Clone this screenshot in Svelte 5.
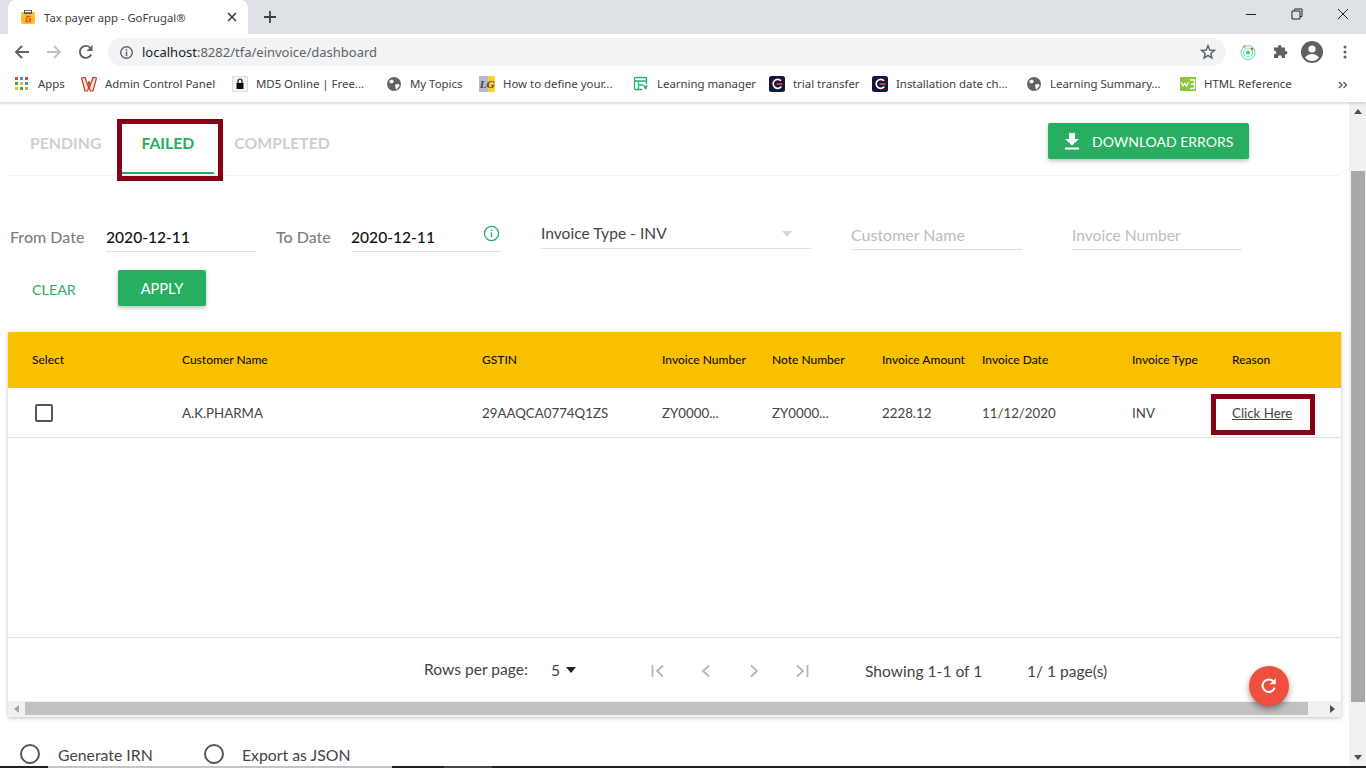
<script>
  const columns = ['Select','Customer Name','GSTIN','Invoice Number','Note Number','Invoice Amount','Invoice Date','Invoice Type','Reason'];
</script>

<div class="page">
  <header class="browser">
    <div class="tabstrip">
      <div class="tab">
        <svg class="fav" viewBox="0 0 16 16" width="16" height="16">
          <path d="M1 4.500 Q1 3 2.500 3 H13.500 Q15 3 15 4.500 V13 Q15 15 13 15 H3 Q1 15 1 13Z" fill="#fbc02d"/>
          <rect x="4" y="1" width="8" height="4" fill="#555"/>
          <rect x="5" y="1.800" width="6" height="1.400" fill="#fff"/>
          <path d="M10.500 7.500 H7 L6 12.500 H10 L10.500 10 H8.500" fill="none" stroke="#e8541c" stroke-width="1.500"/>
        </svg>
        <span class="tabtitle">Tax payer app - GoFrugal®</span>
        <svg class="tabx" viewBox="0 0 10 10" width="10" height="10"><path d="M1 1 L9 9 M9 1 L1 9" stroke="#3c4043" stroke-width="1.700"/></svg>
      </div>
      <svg class="plus" viewBox="0 0 12 12" width="12" height="12"><path d="M6 0 V12 M0 6 H12" stroke="#3c4043" stroke-width="1.800"/></svg>
      <div class="winctl">
        <svg viewBox="0 0 12 12" width="12" height="12"><path d="M1 6.500 H11" stroke="#222" stroke-width="1"/></svg>
        <svg viewBox="0 0 12 12" width="12" height="12"><path d="M3.500 2.500 V1 H11 V8.500 H9 M1 3 H9 V11 H1Z" fill="none" stroke="#222" stroke-width="1"/></svg>
        <svg viewBox="0 0 12 12" width="12" height="12"><path d="M1 1 L11 11 M11 1 L1 11" stroke="#222" stroke-width="1"/></svg>
      </div>
    </div>

    <div class="toolbar">
      <svg class="nav back" viewBox="0 0 16 16" width="16" height="16"><path d="M15 8 H2 M8 2 L2 8 L8 14" fill="none" stroke="#5f6368" stroke-width="1.900"/></svg>
      <svg class="nav fwd" viewBox="0 0 16 16" width="16" height="16"><path d="M1 8 H14 M8 2 L14 8 L8 14" fill="none" stroke="#bdc1c6" stroke-width="1.900"/></svg>
      <svg class="nav reload" viewBox="0 0 16 16" width="16" height="16"><path d="M13.300 10.500 A6 6 0 1 1 12.500 4" fill="none" stroke="#5f6368" stroke-width="1.900"/><path d="M14.500 1 V7 H8.500Z" fill="#5f6368"/></svg>
      <div class="omnibox">
        <svg viewBox="0 0 16 16" width="15" height="15"><circle cx="8" cy="8" r="6.200" fill="none" stroke="#5f6368" stroke-width="1.500"/><path d="M8 7 V12 M8 4.200 V5.800" stroke="#5f6368" stroke-width="1.600"/></svg>
        <span class="url"><b>localhost</b>:8282/tfa/einvoice/dashboard</span>
        <svg class="star" viewBox="0 0 16 16" width="16" height="16"><path d="M8 1.800 L9.800 6 L14.300 6.400 L10.900 9.400 L11.900 13.900 L8 11.500 L4.100 13.900 L5.100 9.400 L1.700 6.400 L6.200 6Z" fill="none" stroke="#5f6368" stroke-width="1.500"/></svg>
      </div>
      <svg class="ext radar" viewBox="0 0 16 16" width="16" height="16"><circle cx="8" cy="8.500" r="7" fill="none" stroke="#6fe6b8" stroke-width="1.200"/><circle cx="8" cy="8.500" r="4.500" fill="none" stroke="#6fe6b8" stroke-width="1.200"/><circle cx="8" cy="8.500" r="2" fill="#3fce97"/><circle cx="12" cy="5" r="1.300" fill="#ee5a33"/><circle cx="4.300" cy="2.500" r="1.300" fill="#f0953b"/></svg>
      <svg class="ext puzzle" viewBox="0 0 16 16" width="16" height="16"><path d="M6 2.500 A1.800 1.800 0 0 1 9.500 2.500 V3.500 H13 V7 H14 A1.800 1.800 0 0 1 14 10.500 H13 V14 H9.800 V13 A1.800 1.800 0 0 0 6.200 13 V14 H2 V10.200 H3 A1.800 1.800 0 0 0 3 6.800 H2 V3.500 H6Z" fill="#5f6368"/></svg>
      <svg class="ext avatar" viewBox="0 0 22 22" width="22" height="22"><circle cx="11" cy="11" r="11" fill="#5f6368"/><circle cx="11" cy="8" r="3.600" fill="#fff"/><path d="M4 16.500 Q7 13 11 13 Q15 13 18 16.500 Q15 20 11 20 Q7 20 4 16.500Z" fill="#fff"/></svg>
      <svg class="ext dots" viewBox="0 0 4 14" width="4" height="14"><circle cx="2" cy="2" r="1.500" fill="#5f6368"/><circle cx="2" cy="7" r="1.500" fill="#5f6368"/><circle cx="2" cy="12" r="1.500" fill="#5f6368"/></svg>
    </div>

    <div class="bookmarks">
      <div class="bm">
        <svg viewBox="0 0 13 13" width="13" height="13" class="apps">
          <rect x="0" y="0" width="3" height="3" fill="#ea4335"/><rect x="5" y="0" width="3" height="3" fill="#4285f4"/><rect x="10" y="0" width="3" height="3" fill="#ea4335"/>
          <rect x="0" y="5" width="3" height="3" fill="#34a853"/><rect x="5" y="5" width="3" height="3" fill="#fbbc05"/><rect x="10" y="5" width="3" height="3" fill="#4285f4"/>
          <rect x="0" y="10" width="3" height="3" fill="#fbbc05"/><rect x="5" y="10" width="3" height="3" fill="#34a853"/><rect x="10" y="10" width="3" height="3" fill="#f29900"/>
        </svg>
        <span>Apps</span>
      </div>
      <div class="bm">
        <svg viewBox="0 0 16 16" width="16" height="16"><path d="M0.500 2 L4 1.500 L7 10 L8 5 L9 10 L12 1.500 L15.500 2 L12 15 L9.500 15 L8 11 L6.500 15 L4 15Z" fill="#f3e3c8" stroke="#c9362b" stroke-width="1.200"/></svg>
        <span>Admin Control Panel</span>
      </div>
      <div class="bm">
        <svg viewBox="0 0 16 16" width="16" height="16"><rect x="0.500" y="0.500" width="15" height="15" fill="#f6f6f6" stroke="#ddd"/><rect x="4.500" y="7" width="7" height="6" fill="#111"/><path d="M6 7 V5 A2 2 0 0 1 10 5 V7" fill="none" stroke="#111" stroke-width="1.200"/></svg>
        <span>MD5 Online | Free...</span>
      </div>
      <div class="bm">
        <svg viewBox="0 0 16 16" width="16" height="16"><circle cx="8" cy="8" r="7" fill="#5f6368"/><path d="M3 5 L6 3.500 L8 5 L7 7 L4.500 7.500Z M9 8.500 L13 8 L13.500 10 L10.500 13.500 L9.500 12Z" fill="#fff"/></svg>
        <span>My Topics</span>
      </div>
      <div class="bm">
        <span class="lg">LG</span>
        <span>How to define your...</span>
      </div>
      <div class="bm">
        <svg viewBox="0 0 16 16" width="16" height="16"><path d="M9.500 13.500 H2.500 Q1.500 13.500 1.500 12.500 V2.500 Q1.500 1.500 2.500 1.500 H12.500 Q13.500 1.500 13.500 2.500 V8 M1.500 5 H13.500 M5.500 5 V13.500 M5.500 9 H10.500" fill="none" stroke="#26b36b" stroke-width="1.300"/><path d="M10 9.500 H15 L12.500 14Z" fill="#26b36b"/></svg>
        <span>Learning manager</span>
      </div>
      <div class="bm">
        <svg viewBox="0 0 16 16" width="16" height="16"><rect width="16" height="16" rx="2.500" fill="#14173a"/><path d="M12 4.800 A4.500 4.500 0 1 0 12.300 10.500" fill="none" stroke="#fff" stroke-width="1.700"/><rect x="7.500" y="7.200" width="6" height="1.800" fill="#e63838"/></svg>
        <span>trial transfer</span>
      </div>
      <div class="bm">
        <svg viewBox="0 0 16 16" width="16" height="16"><rect width="16" height="16" rx="2.500" fill="#14173a"/><path d="M12 4.800 A4.500 4.500 0 1 0 12.300 10.500" fill="none" stroke="#fff" stroke-width="1.700"/><rect x="7.500" y="7.200" width="6" height="1.800" fill="#e63838"/></svg>
        <span>Installation date ch...</span>
      </div>
      <div class="bm">
        <svg viewBox="0 0 16 16" width="16" height="16"><circle cx="8" cy="8" r="7" fill="#5f6368"/><path d="M3 5 L6 3.500 L8 5 L7 7 L4.500 7.500Z M9 8.500 L13 8 L13.500 10 L10.500 13.500 L9.500 12Z" fill="#fff"/></svg>
        <span>Learning Summary...</span>
      </div>
      <div class="bm">
        <svg viewBox="0 0 16 14" width="16" height="14"><rect width="16" height="14" fill="#8cc63f"/><path d="M1 5 L3 9 L4.800 6 L6.500 9 L8.500 5" fill="none" stroke="#fff" stroke-width="1.100"/><path d="M10 3 H14.500 V11.500 H10 M11 7 H14.500" fill="none" stroke="#fff" stroke-width="1.300"/></svg>
        <span>HTML Reference</span>
      </div>
      <svg class="more" viewBox="0 0 10 8" width="10" height="8"><path d="M1 1 L4 4 L1 7 M5.500 1 L8.500 4 L5.500 7" fill="none" stroke="#5f6368" stroke-width="1.500"/></svg>
    </div>
  </header>

  <div class="viewport">
    <main class="content">
      <div class="tabs">
        <div class="tabitem">PENDING</div>
        <div class="tabitem active">FAILED</div>
        <div class="tabitem">COMPLETED</div>
        <button class="btn download">
          <svg viewBox="0 0 16 18" width="16" height="18"><path d="M5 1 H11 V7 H15 L8 13.500 L1 7 H5Z M1 15.500 H15 V17.500 H1Z" fill="#fff"/></svg>
          DOWNLOAD ERRORS
        </button>
      </div>

      <div class="filters">
        <label class="lbl from">From Date</label>
        <div class="date first">2020-12-11</div>
        <label class="lbl to">To Date</label>
        <div class="date last">2020-12-11
          <svg class="info" viewBox="0 0 18 18" width="17" height="17"><circle cx="9" cy="9" r="7.500" fill="none" stroke="#27ae60" stroke-width="1.400"/><path d="M9 8 V13 M9 4.800 V6.400" stroke="#27ae60" stroke-width="1.500"/></svg>
        </div>
        <div class="select">Invoice Type - INV<i class="caret"></i></div>
        <div class="ph name">Customer Name</div>
        <div class="ph number">Invoice Number</div>
      </div>

      <div class="actions">
        <span class="clear">CLEAR</span>
        <button class="btn apply">APPLY</button>
      </div>

      <section class="card">
        <div class="grid head">
          {#each columns as c}<div>{c}</div>{/each}
        </div>
        <div class="grid row">
          <div><span class="check"></span></div>
          <div>A.K.PHARMA</div>
          <div>29AAQCA0774Q1ZS</div>
          <div>ZY0000...</div>
          <div>ZY0000...</div>
          <div>2228.12</div>
          <div>11/12/2020</div>
          <div>INV</div>
          <div class="link">Click Here</div>
        </div>
        <div class="empty"></div>
        <div class="pager">
          <span class="rows">Rows per page:</span>
          <span class="five">5</span>
          <i class="drop"></i>
          <svg class="pg" viewBox="0 0 14 14" width="14" height="14"><path d="M1.500 1 V13 M12 1.500 L6 7 L12 12.500" fill="none" stroke="#b5b5b5" stroke-width="1.700"/></svg>
          <svg class="pg" viewBox="0 0 14 14" width="14" height="14"><path d="M10 1.500 L4 7 L10 12.500" fill="none" stroke="#b5b5b5" stroke-width="1.700"/></svg>
          <svg class="pg" viewBox="0 0 14 14" width="14" height="14"><path d="M4 1.500 L10 7 L4 12.500" fill="none" stroke="#b5b5b5" stroke-width="1.700"/></svg>
          <svg class="pg" viewBox="0 0 14 14" width="14" height="14"><path d="M12.500 1 V13 M2 1.500 L8 7 L2 12.500" fill="none" stroke="#b5b5b5" stroke-width="1.700"/></svg>
          <span class="showing">Showing 1-1 of 1</span>
          <span class="pages">1/ 1 page(s)</span>
        </div>
        <div class="hscroll">
          <i class="arr left"></i>
          <div class="hthumb"></div>
          <i class="arr right"></i>
        </div>
      </section>

      <div class="radios">
        <span class="radio"></span><span class="rtext first">Generate IRN</span>
        <span class="radio"></span><span class="rtext">Export as JSON</span>
      </div>

      <div class="mark mark-tab"></div>
      <div class="mark mark-link"></div>
      <button class="fab" aria-label="Refresh">
        <svg viewBox="0 0 16 16" width="18" height="18"><path d="M13 9.500 A5.500 5.500 0 1 1 11.800 4" fill="none" stroke="#fff" stroke-width="1.800"/><path d="M14 1 V6.500 H8.500Z" fill="#fff"/></svg>
      </button>
    </main>
    <aside class="vscroll">
      <i class="varr up"></i>
      <div class="vthumb"></div>
      <i class="varr down"></i>
    </aside>
  </div>
  <div class="taskbar">
    <span class="tb-a"></span><span class="tb-b"></span><span class="tb-c"></span><span class="tb-d"></span>
  </div>
</div>

<style>
  :global(body) { margin: 0; background: #fff; }
  .page { width: 1366px; height: 768px; overflow: hidden; display: flex; flex-direction: column; font-family: Lato, sans-serif; }
  .browser { flex: none; font-family: "Noto Sans", sans-serif; position: relative; z-index: 2; }

  .tabstrip { height: 34px; background: #dee1e6; display: flex; align-items: flex-end; position: relative; }
  .tab { width: 240px; height: 34px; margin-left: 8px; background: #fff; border-radius: 8px 8px 0 0; display: flex; align-items: center; box-sizing: border-box; padding: 0 12px; font-size: 11.300px; color: #3c4043; }
  .fav { flex: none; }
  .tabtitle { margin-left: 8px; flex: 1; white-space: nowrap; }
  .tabx { flex: none; margin-right: -1px; }
  .plus { margin: 0 0 11px 16px; }
  .winctl { position: absolute; right: 0; top: 0; width: 138px; height: 28px; display: flex; align-items: center; justify-content: space-between; padding: 0 17px 0 17px; box-sizing: border-box; }

  .toolbar { height: 34px; background: #fff; display: flex; align-items: center; position: relative; }
  .nav { flex: none; margin-top: 2px; }
  .back { margin-left: 14px; }
  .fwd { margin-left: 16px; }
  .reload { margin-left: 16px; }
  .omnibox { margin-left: 14px; width: 1118px; height: 28px; margin-top: 2px; border-radius: 14px; background: #f1f3f4; display: flex; align-items: center; box-sizing: border-box; padding: 0 10px 0 11px; }
  .url { margin-left: 8px; font-size: 13px; color: #5f6368; flex: 1; white-space: nowrap; }
  .url b { font-weight: 400; color: #202124; }
  .ext { flex: none; margin-top: 2px; }
  .radar { margin-left: 14px; }
  .puzzle { margin-left: 16px; }
  .avatar { margin-left: 13px; }
  .dots { margin-left: 20px; }

  .bookmarks { height: 34px; background: #fff; box-shadow: 0 2px 2px rgba(0,0,0,.12); display: grid; grid-template-columns: 66px 151px 154px 93px 154px 136px 103px 154px 154px 1fr; padding-left: 15px; box-sizing: border-box; align-items: center; font-size: 11.400px; color: #3c4043; position: relative; }
  .bm { display: flex; align-items: center; gap: 8px; white-space: nowrap; height: 20px; margin-top: -3px; }
  .bm svg { flex: none; }
  .bm .apps { margin-right: 2px; }
  .lg { width: 16px; height: 16px; flex: none; background: linear-gradient(90deg, #b9b9d4 0 55%, #fdd02f 55%); color: #444; font: italic bold 11px/16px "Liberation Serif", serif; text-align: center; }
  .more { position: absolute; left: 1338px; top: 13px; }

  .viewport { flex: 1; min-height: 0; display: flex; }
  .content { width: 1349px; flex: none; position: relative; overflow: hidden; }

  .tabs { margin: 0 10px; height: 73px; border-bottom: 1px solid #f1f1f1; display: flex; align-items: flex-start; position: relative; font-size: 15.800px; font-weight: 700; color: #cfcfcf; }
  .tabitem { padding: 31px 20px 0; height: 42px; }
  .tabitem.active { color: #27ae60; position: relative; }
  .tabitem.active::after { content: ""; position: absolute; left: 0; right: 0; top: 70px; height: 2px; background: #27ae60; }

  .btn { border: 0; background: #27ae60; color: #fff; font-family: Lato, sans-serif; border-radius: 2px; box-shadow: 0 2px 4px rgba(0,0,0,.25); padding: 0; }
  .download { margin-left: auto; margin-right: 90px; margin-top: 21px; width: 201px; height: 36px; display: flex; align-items: center; font-size: 14px; padding-left: 16px; gap: 12px; box-sizing: border-box; white-space: nowrap; }

  .filters { position: relative; height: 70px; display: grid; grid-template-columns: 96px 150px 20px 75px 150px 40px 270px 40px 171px 50px 170px; margin-left: 10px; font-size: 15.600px; }
  .lbl { grid-row: 1; margin-top: 51px; color: #7f7f7f; font-weight: 500; font-size: 16px; }
  .from { grid-column: 1; }
  .to { grid-column: 4; }
  .date { margin-top: 52px; height: 23px; border-bottom: 1px solid #e0e0e0; color: #111; font-weight: 500; grid-row: 1; line-height: 18px; position: relative; }
  .date.first { grid-column: 2; }
  .date.last { grid-column: 5; }
  .info { position: absolute; right: 1px; top: -3px; }
  .select { grid-column: 7; grid-row: 1; margin-top: 48px; height: 24px; border-bottom: 1px solid #e0e0e0; color: #444; position: relative; }
  .caret { position: absolute; right: 19px; top: 7px; border: 5px solid transparent; border-top: 6px solid #d5d5d5; border-bottom: 0; }
  .ph { grid-row: 1; margin-top: 50px; height: 23px; border-bottom: 1px solid #e0e0e0; color: #bdbdbd; }
  .name { grid-column: 9; font-size: 16px; margin-top: 49px; height: 24px; }
  .number { grid-column: 11; }

  .actions { height: 86px; position: relative; display: flex; align-items: flex-start; }
  .clear { margin: 35px 0 0 32px; font-size: 14.300px; color: #27ae60; width: 86px; }
  .apply { margin-top: 24px; width: 88px; height: 36px; font-size: 14.600px; }

  .card { margin-left: 8px; width: 1333px; box-shadow: 0 1px 4px rgba(0,0,0,.25); }
  .grid { display: grid; grid-template-columns: 150px 300px 180px 110px 110px 100px 150px 100px 1fr; padding-left: 24px; align-items: center; white-space: nowrap; }
  .head { height: 54px; padding-bottom: 2px; background: #f9c100; font-size: 12px; font-weight: 500; color: #111; }
  .row { height: 49px; border-bottom: 1px solid #e0e0e0; font-size: 13.300px; color: #444; }
  .check { display: block; margin-left: 3px; width: 14px; height: 14px; border: 2px solid #555; border-radius: 2px; }
  .link { text-decoration: underline; justify-self: start; }
  .empty { height: 199px; border-bottom: 1px solid #e0e0e0; }
  .pager { height: 63px; position: relative; display: grid; grid-template-columns: 127px 20px 80px 48px 48px 48px 70px 162px 1fr; padding-left: 416px; align-items: center; font-size: 15.600px; color: #444; white-space: nowrap; }
  .rows { margin-bottom: 1px; }
  .pg, .showing, .pages { margin-top: 2px; }
  .drop { width: 0; height: 0; border: 5.500px solid transparent; border-top: 6px solid #222; border-bottom: 0; margin-left: -5px; }
  .hscroll { height: 16px; background: #f1f1f1; display: flex; align-items: center; }
  .hthumb { width: 1283px; height: 13px; margin-bottom: 1px; background: #c1c1c1; margin-left: 1px; }
  .arr { width: 0; height: 0; border: 4px solid transparent; }
  .arr.left { margin-left: 6px; border-right: 5px solid #a3a3a3; border-left: 0; margin-right: 5px; }
  .arr.right { margin-left: 22px; border-left: 5px solid #505050; border-right: 0; }

  .radios { margin-top: 27px; display: flex; align-items: center; padding-left: 20px; font-size: 15.800px; color: #444; }
  .radio { width: 16px; height: 16px; border: 2px solid #555; border-radius: 50%; flex: none; }
  .rtext { margin-left: 18px; }
  .rtext.first { width: 146px; }

  .mark { position: absolute; border: 5px solid #870018; box-sizing: border-box; pointer-events: none; }
  .mark-tab { left: 117px; top: 17px; width: 106px; height: 62px; }
  .mark-link { left: 1211px; top: 292px; width: 104px; height: 41px; }
  .fab { position: absolute; left: 1249px; top: 564px; width: 40px; height: 40px; border-radius: 50%; border: 0; background: #ee4f3f; box-shadow: 0 3px 6px rgba(0,0,0,.4); display: flex; align-items: center; justify-content: center; padding: 0; }

  .vscroll { width: 17px; flex: none; background: #f1f1f1; position: relative; }
  .vthumb { position: absolute; left: 2px; right: 1px; top: 69px; height: 531px; background: #a8a8a8; }
  .varr { position: absolute; left: 5px; width: 0; height: 0; border: 4px solid transparent; }
  .up { top: 7px; border-bottom: 5px solid #505050; border-top: 0; }
  .down { bottom: 6px; border-top: 5px solid #505050; border-bottom: 0; }

  .taskbar { height: 2px; flex: none; background: #222; display: grid; grid-template-columns: 48px 344px 52px 48px; }
  .tb-b { background: #c4c4c4; }
  .tb-d { background: #454545; }
</style>
